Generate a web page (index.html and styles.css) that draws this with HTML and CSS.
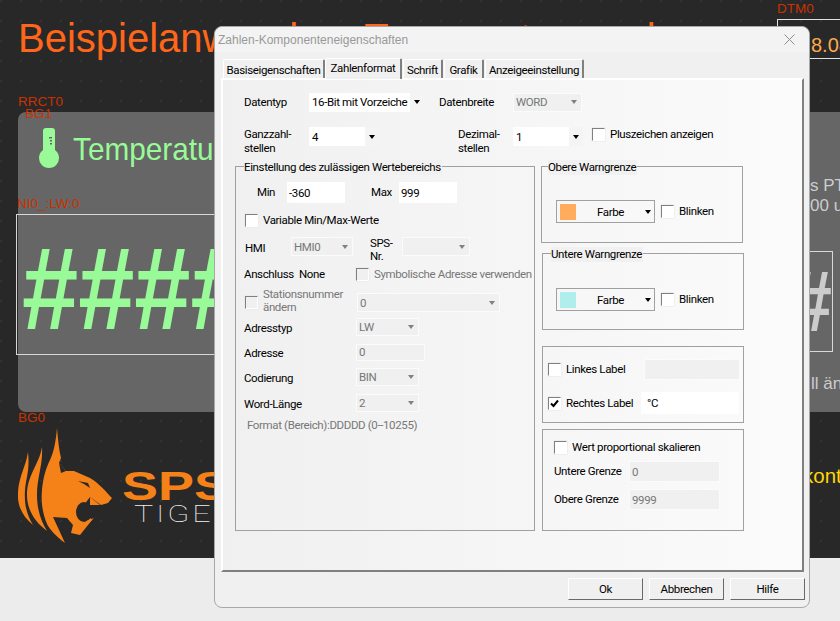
FILE: index.html
```html
<!DOCTYPE html>
<html lang="de">
<head>
    <meta charset="UTF-8">
    <meta name="viewport" content="width=device-width, initial-scale=1.0">
    <title>Zahlen-Komponenteneigenschaften</title>
    <link rel="stylesheet" href="styles.css">
</head>
<body>

    <!-- HMI editor canvas behind the dialog -->
    <div class="canvas">
        <div class="hmi-title">Beispielanwendung Temperaturregelung</div>
        <div class="tag tag-dtm">DTM0</div>
        <div class="clock-box">8.08.2023</div>
        <div class="tag tag-rrct">RRCT0</div>

        <div class="gray-panel"></div>
        <div class="tag tag-bg1">BG1</div>
        <svg class="thermo" viewBox="0 0 22 40">
            <path fill="#98fb98" d="M5 3a3 3 0 0 1 3-3h6a3 3 0 0 1 3 3v19a10 10 0 1 1-12 0z"/>
            <path fill="#666" d="M11 9h3v1.500h-3zM12 12h2v1.500h-2zM12 15h2v1.500h-2z"/>
        </svg>
        <div class="temp-title">Temperatur</div>
        <div class="tag tag-ni">NI0_:LW:0</div>
        <div class="num-box"><span class="hashes">#####</span></div>
        <div class="side-text side-one">s PT<br>00 u</div>
        <div class="num-box-right"><span>#</span></div>
        <div class="side-text side-two">ll änd</div>

        <div class="tag tag-bg0">BG0</div>
        <svg class="tiger" viewBox="18 428 96 116">
            <path fill="#f58219" d="M28 452C30 470 26 478 25 490C24 505 27 515 33 525C22 516 17 505 18 492C19 476 26 466 28 452z"/>
            <path fill="#f58219" d="M42 447C43 465 37 478 37 495C37 510 41 521 47 531C35 522 27 510 27 495C27 475 39 465 42 447z"/>
            <path fill="#f58219" d="M57 428C58 440 59 450 61 458L59 463L66 471L74 471L90 478C100 484 106 492 112 498L108 503L101 505L90 497C86 502 84 506 81 508L92 520L80 535L71 533L73 525L67 518L53 517L65 543C56 536 50 530 47 524C42 512 41 500 42 490C43 478 46 468 50 460C54 452 56 440 57 428z"/>
            <ellipse fill="#282828" cx="84" cy="512" rx="8" ry="10"/>
            <path fill="#f58219" d="M90 497L100 505L90 505zM86 521L94 518L88 524z"/>
            <path fill="#282828" d="M59 463L66 471L61 473zM78 481L88 483L90 488L84 484z"/>
        </svg>
        <div class="brand-sps">SPS</div>
        <div class="brand-tiger">TIGER</div>
        <div class="side-yellow">kont</div>
    </div>

    <!-- Number component properties dialog -->
    <div class="dialog">
        <div class="dialog-title">
            <span>Zahlen-Komponenteneigenschaften</span>
            <svg class="close-icon" viewBox="0 0 11 11"><path d="M.5.500l10 10M10.500.500l-10 10"/></svg>
        </div>

        <div class="tabs">
            <div class="tab tab-basis">Basiseigenschaften</div>
            <div class="tab tab-active">Zahlenformat</div>
            <div class="tab tab-schrift">Schrift</div>
            <div class="tab tab-grafik">Grafik</div>
            <div class="tab tab-anzeige">Anzeigeeinstellung</div>
        </div>

        <div class="tab-panel">
            <div class="row row-type">
                <div class="lbl w-65">Datentyp</div>
                <div class="combo w-115"><span>16-Bit mit Vorzeiche</span><i class="arrow"></i></div>
                <div class="lbl lbl-width">Datenbreite</div>
                <div class="combo off w-69"><span>WORD</span><i class="arrow"></i></div>
            </div>
            <div class="row row-digits">
                <div class="lbl w-65 two-line">Ganzzahl-<br>stellen</div>
                <div class="combo w-70"><span>4</span><i class="arrow"></i></div>
                <div class="lbl two-line lbl-dec">Dezimal-<br>stellen</div>
                <div class="combo w-70"><span>1</span><i class="arrow"></i></div>
                <div class="check check-plus"></div>
                <div class="lbl">Pluszeichen anzeigen</div>
            </div>

            <div class="columns">
                <div class="group group-range">
                    <div class="group-title">Einstellung des zulässigen Wertebereichs</div>
                    <div class="row row-minmax">
                        <div class="lbl lbl-min">Min</div>
                        <div class="field w-58">-360</div>
                        <div class="lbl lbl-max">Max</div>
                        <div class="field w-58">999</div>
                    </div>
                    <div class="row row-variable">
                        <div class="check"></div>
                        <div class="lbl">Variable Min/Max-Werte</div>
                    </div>
                    <div class="row row-hmi">
                        <div class="lbl w-46 lbl-hmi">HMI</div>
                        <div class="combo off w-62"><span>HMI0</span><i class="arrow"></i></div>
                        <div class="lbl two-line lbl-sps">SPS-<br>Nr.</div>
                        <div class="combo off w-68"><span></span><i class="arrow"></i></div>
                    </div>
                    <div class="row row-port">
                        <div class="lbl w-55">Anschluss</div>
                        <div class="lbl w-57">None</div>
                        <div class="check off"></div>
                        <div class="lbl muted">Symbolische Adresse verwenden</div>
                    </div>
                    <div class="row row-station">
                        <div class="check off"></div>
                        <div class="lbl muted two-line w-94">Stationsnummer<br>ändern</div>
                        <div class="combo off w-143"><span>0</span><i class="arrow"></i></div>
                    </div>
                    <div class="row row-addr row-addrtype">
                        <div class="lbl w-112">Adresstyp</div>
                        <div class="combo off w-63"><span>LW</span><i class="arrow"></i></div>
                    </div>
                    <div class="row row-addr row-address">
                        <div class="lbl w-112">Adresse</div>
                        <div class="field off w-69">0</div>
                    </div>
                    <div class="row row-addr row-coding">
                        <div class="lbl w-112">Codierung</div>
                        <div class="combo off w-63"><span>BIN</span><i class="arrow"></i></div>
                    </div>
                    <div class="row row-addr row-word">
                        <div class="lbl w-112">Word-Länge</div>
                        <div class="combo off w-63"><span>2</span><i class="arrow"></i></div>
                    </div>
                    <div class="lbl muted format-note">Format (Bereich):DDDDD (0--10255)</div>
                </div>

                <div class="right-col">
                    <div class="group group-warn group-upper">
                        <div class="group-title">Obere Warngrenze</div>
                        <div class="row">
                            <div class="color-btn">
                                <i class="swatch swatch-orange"></i>
                                <span>Farbe</span>
                                <i class="arrow"></i>
                            </div>
                            <div class="check"></div>
                            <div class="lbl">Blinken</div>
                        </div>
                    </div>
                    <div class="group group-warn group-lower">
                        <div class="group-title">Untere Warngrenze</div>
                        <div class="row">
                            <div class="color-btn">
                                <i class="swatch swatch-cyan"></i>
                                <span>Farbe</span>
                                <i class="arrow"></i>
                            </div>
                            <div class="check"></div>
                            <div class="lbl">Blinken</div>
                        </div>
                    </div>
                    <div class="group group-labels">
                        <div class="row row-left-label">
                            <div class="check"></div>
                            <div class="lbl w-78">Linkes Label</div>
                            <div class="field off w-96"></div>
                        </div>
                        <div class="row row-right-label">
                            <div class="check checked">
                                <svg viewBox="0 0 11 11"><path d="M2 5.500l2.500 2.500 4.500-5.500"/></svg>
                            </div>
                            <div class="lbl w-75">Rechtes Label</div>
                            <div class="field w-98">°C</div>
                        </div>
                    </div>
                    <div class="group group-scale">
                        <div class="row row-scale-check">
                            <div class="check"></div>
                            <div class="lbl">Wert proportional skalieren</div>
                        </div>
                        <div class="row row-limit">
                            <div class="lbl w-75">Untere Grenze</div>
                            <div class="field off w-91">0</div>
                        </div>
                        <div class="row row-limit">
                            <div class="lbl w-75">Obere Grenze</div>
                            <div class="field off w-91">9999</div>
                        </div>
                    </div>
                </div>
            </div>
        </div>

        <div class="buttons">
            <div class="btn">Ok</div>
            <div class="btn">Abbrechen</div>
            <div class="btn">Hilfe</div>
        </div>
    </div>

</body>
</html>
```

FILE: styles.css
```css
html, body {
    margin: 0;
    height: 100%;
    overflow: hidden;
    background-color: #ececec;
    font-family: "Liberation Sans", Arial, sans-serif;
}

/* Editor canvas */
.canvas {
    position: relative;
    width: 840px;
    height: 558px;
    overflow: hidden;
    background-color: #282828;
    background-image: radial-gradient(circle at 1px 1px, #323232 1px, transparent 1px);
    background-size: 20px 20px;
}

.hmi-title {
    position: absolute;
    left: 18px;
    top: 15px;
    font-size: 40px;
    line-height: 46px;
    word-spacing: -11px;
    white-space: nowrap;
    color: #ff661a;
}

.tag {
    position: absolute;
    font-size: 13.500px;
    line-height: 16px;
    color: #c83200;
    white-space: nowrap;
}

.tag-dtm { left: 777px; top: 1px; }
.tag-rrct { left: 18px; top: 94px; }
.tag-bg1 { left: 25px; top: 106px; }
.tag-ni { left: 17px; top: 196px; }
.tag-bg0 { left: 18px; top: 410px; }

.clock-box {
    position: absolute;
    left: 777px;
    top: 19px;
    width: 100px;
    height: 38px;
    padding-left: 33px;
    border: 1px solid #e0e0e0;
    font-size: 20px;
    line-height: 50px;
    color: #ffa94d;
}

.gray-panel {
    position: absolute;
    left: 18px;
    top: 112px;
    width: 860px;
    height: 300px;
    border-radius: 8px;
    background-color: #666666;
}

.thermo {
    position: absolute;
    left: 38px;
    top: 128px;
    width: 22px;
    height: 40px;
}

.temp-title {
    position: absolute;
    left: 73px;
    top: 130px;
    font-size: 32px;
    line-height: 38px;
    color: #98fb98;
    transform: scaleX(0.93);
    transform-origin: left center;
}

.num-box {
    position: absolute;
    left: 16px;
    top: 214px;
    width: 300px;
    height: 139px;
    border: 1px solid #d8d8d8;
    overflow: hidden;
}

.hashes {
    position: absolute;
    left: 5px;
    top: 9px;
    font-size: 101px;
    font-weight: bold;
    line-height: 130px;
    color: #98fb98;
    transform: scaleY(1.15);
    transform-origin: left center;
}

.num-box-right {
    position: absolute;
    left: 750px;
    top: 251px;
    width: 81px;
    height: 99px;
    border: 1px solid #d8d8d8;
    overflow: hidden;
}

.num-box-right span {
    position: absolute;
    right: 0;
    top: 0;
    font-size: 75px;
    font-weight: bold;
    line-height: 99px;
    color: #cccccc;
    transform: scaleY(1.15);
}

.side-text {
    position: absolute;
    left: 810px;
    font-size: 17px;
    line-height: 20px;
    color: #cccccc;
    white-space: nowrap;
}

.side-one { top: 176px; }
.side-two { top: 374px; left: 811px; }

.side-yellow {
    position: absolute;
    left: 803px;
    top: 464px;
    font-size: 20.500px;
    line-height: 24px;
    color: #ffd700;
}

.tiger {
    position: absolute;
    left: 18px;
    top: 428px;
    width: 96px;
    height: 116px;
}

.brand-sps {
    position: absolute;
    left: 122px;
    top: 466px;
    font-size: 40px;
    line-height: 40px;
    font-weight: bold;
    color: #f58219;
    transform: scaleX(1.35);
    transform-origin: left center;
}

.brand-tiger {
    position: absolute;
    left: 134px;
    top: 503px;
    font-family: Roboto, "Liberation Sans", sans-serif;
    font-size: 23px;
    font-weight: 100;
    line-height: 24px;
    letter-spacing: 2px;
    color: #f0f0f0;
    transform: scaleX(1.4);
    transform-origin: left center;
}

/* Dialog window */
.dialog {
    position: absolute;
    left: 214px;
    top: 26px;
    width: 594px;
    height: 580px;
    border: 1px solid #a8a8a8;
    border-radius: 8px;
    background-color: #f0f0f0;
    font-family: Roboto, "Liberation Sans", sans-serif;
    font-size: 11.500px;
    font-variant-ligatures: none;
    font-feature-settings: "liga" 0, "calt" 0;
    letter-spacing: -0.370px;
    color: #000;
}

.dialog-title {
    display: flex;
    justify-content: space-between;
    align-items: center;
    height: 25px;
    padding: 0 14px 0 3px;
    border-radius: 8px 8px 0 0;
    background-color: #f3f3f3;
    font-family: "Liberation Sans", Arial, sans-serif;
    font-size: 12px;
    letter-spacing: 0;
    color: #999999;
}

.close-icon {
    width: 11px;
    height: 11px;
    stroke: #8c8c8c;
    fill: none;
}

.tabs {
    display: flex;
    align-items: flex-end;
    height: 26px;
    padding-left: 8px;
}

.tab {
    box-sizing: border-box;
    height: 19px;
    line-height: 20px;
    text-align: center;
    border: 1px solid #fff;
    border-bottom: none;
    border-right: 2px solid #808080;
    border-radius: 2px 2px 0 0;
}

.tab-basis { width: 102px; }
.tab-active { width: 77px; height: 21px; line-height: 19px; background-color: #f0f0f0; position: relative; margin-bottom: -1px; }
.tab-schrift { width: 40px; margin-left: 1px; }
.tab-grafik { width: 40px; margin-left: 1px; }
.tab-anzeige { width: 99px; margin-left: 1px; }

.tab-panel {
    box-sizing: border-box;
    width: 583px;
    height: 494px;
    margin-left: 6px;
    padding: 11px 0 0 21px;
    border: 2px solid #fff;
    border-right: 2px solid #808080;
    border-bottom: 2px solid #808080;
    background: linear-gradient(to right, #f0f0f0, #fbfbfb);
}

.row {
    display: flex;
    align-items: center;
}

.lbl {
    flex: none;
    line-height: 13px;
    white-space: nowrap;
}

.two-line { line-height: 14px; }
.muted { color: #777777; }

.w-46 { width: 46px; }
.w-55 { width: 55px; }
.w-57 { width: 57px; }
.w-58 { width: 58px; }
.w-62 { width: 62px; }
.w-63 { width: 63px; }
.w-65 { width: 65px; }
.w-68 { width: 68px; }
.w-69 { width: 69px; }
.w-70 { width: 70px; }
.w-75 { width: 75px; }
.w-78 { width: 78px; }
.w-91 { width: 91px; }
.w-94 { width: 94px; }
.w-96 { width: 96px; }
.w-98 { width: 98px; }
.w-112 { width: 112px; }
.w-115 { width: 115px; }
.w-143 { width: 143px; }

/* Combo boxes and fields */
.combo, .field {
    box-sizing: border-box;
    flex: none;
    display: flex;
    align-items: center;
    height: 19px;
    padding-left: 3px;
    background-color: #fff;
    overflow: hidden;
    white-space: nowrap;
}

.combo span {
    flex: 1;
    overflow: hidden;
}

.combo .arrow {
    flex: none;
    align-self: stretch;
    width: 14px;
    background-color: #f4f4f4;
    position: relative;
}

.arrow::after {
    content: "";
    position: absolute;
    left: 4px;
    top: 50%;
    margin-top: -2px;
    border-left: 3.500px solid transparent;
    border-right: 3.500px solid transparent;
    border-top: 4px solid #000;
}

.combo.off, .field.off {
    background-color: #f0f0f0;
    border: 1px solid #fbfbfb;
    padding-left: 2px;
    color: #777777;
}

.combo.off .arrow { background: none; }
.combo.off .arrow::after { border-top-color: #808080; }

.field {
    height: 21px;
    padding-left: 2px;
}

.check {
    box-sizing: border-box;
    flex: none;
    width: 13px;
    height: 13px;
    margin-right: 5px;
    background-color: #fff;
    border: 1px solid #fff;
    border-top-color: #808080;
    border-left-color: #808080;
    box-shadow: 0 0 0 0.500px #e6e6e6;
}

.check.off { background-color: #f0f0f0; }

.check svg {
    display: block;
    width: 11px;
    height: 11px;
    fill: none;
    stroke: #000;
    stroke-width: 2;
}

/* Top rows */
.row-type { height: 22px; }
.lbl-width { margin-left: 15px; width: 74px; }

.row-digits {
    height: 25px;
    margin-top: 14px;
    align-items: flex-start;
}

.lbl-dec { margin-left: 79px; width: 55px; }
.check-plus { margin: 1px 5px 0 9px; }
.row-digits > .lbl:last-child { margin-top: 1px; }

.columns {
    display: flex;
    align-items: flex-start;
    margin: 14px 0 0 -9px;
}

/* Group boxes */
.group {
    position: relative;
    box-sizing: border-box;
    border: 1px solid #a0a0a0;
}

.group-title {
    position: absolute;
    left: 8px;
    top: -7px;
    padding: 0 1px 0 0;
    height: 15px;
    line-height: 14px;
    background-color: #f1f1f1;
    white-space: nowrap;
}

.group-range {
    width: 300px;
    height: 365px;
    padding: 15px 0 0 8px;
}

.row-minmax { height: 21px; }
.lbl-min { margin-left: 13px; width: 30px; }
.lbl-max { margin-left: 26px; width: 28px; }

.row-variable { height: 16px; margin-top: 9px; }
.row-variable .check { margin-left: 1px; }

.row-hmi { height: 22px; margin-top: 9px; align-items: flex-start; }
.lbl-hmi { margin: 5px 0 0 1px; }
.lbl-sps { margin-left: 17px; width: 32px; line-height: 13px; }

.row-port { height: 16px; margin-top: 7px; }

.row-station { height: 21px; margin-top: 10px; }
.row-station .check { margin-left: 1px; }
.row-station .lbl { line-height: 13px; margin-top: -4px; }

.row-addr { height: 18px; }
.row-addr .lbl { padding-top: 2px; }
.row-addr .combo { height: 18px; }
.row-addr .field { height: 17px; }
.row-addrtype { margin-top: 5px; }
.row-address { margin-top: 7px; }
.row-coding { margin-top: 7px; }
.row-word { margin-top: 8px; }

.format-note {
    margin: 7px 0 0 3px;
}

.right-col {
    display: flex;
    flex-direction: column;
    margin-left: 7px;
}

.group-warn {
    width: 202px;
    height: 77px;
    padding: 33px 0 0 13px;
}

.group-upper { margin-left: -1px; padding-left: 14px; }
.group-upper .group-title { left: 6px; }
.group-lower { margin-top: 10px; padding-top: 34px; }
.group-lower .group-title { left: 8px; }

.color-btn {
    box-sizing: border-box;
    display: flex;
    align-items: center;
    width: 99px;
    height: 23px;
    margin-right: 6px;
    padding-left: 3px;
    border: 1px solid #a0a0a0;
    position: relative;
}

.color-btn span {
    flex: 1;
    text-align: center;
    padding-left: 6px;
}

.color-btn .arrow {
    position: relative;
    width: 15px;
    align-self: stretch;
}

.color-btn .arrow::after { left: 6px; }

.swatch {
    width: 16px;
    height: 16px;
}

.swatch-orange { background-color: #ffad5c; }
.swatch-cyan { background-color: #b0eeee; }

.group-labels {
    width: 202px;
    height: 77px;
    margin-top: 16px;
    padding: 12px 0 0 5px;
}

.row-right-label { margin-top: 12px; }
.row-left-label .field { margin-top: 0; }
.row-right-label .field { height: 22px; padding-left: 6px; }

.group-scale {
    width: 202px;
    height: 102px;
    margin-top: 6px;
    padding: 11px 0 0 11px;
}

.row-scale-check { height: 13px; }

.row-limit { margin-top: 7px; }

/* Bottom buttons */
.buttons {
    display: flex;
    justify-content: flex-end;
    gap: 6px;
    padding: 6px 4px 0 0;
}

.btn {
    box-sizing: border-box;
    width: 75px;
    height: 22px;
    line-height: 20px;
    text-align: center;
    border: 1px solid #fff;
    border-right-color: #696969;
    border-bottom-color: #696969;
    background-color: #f0f0f0;
}
```
